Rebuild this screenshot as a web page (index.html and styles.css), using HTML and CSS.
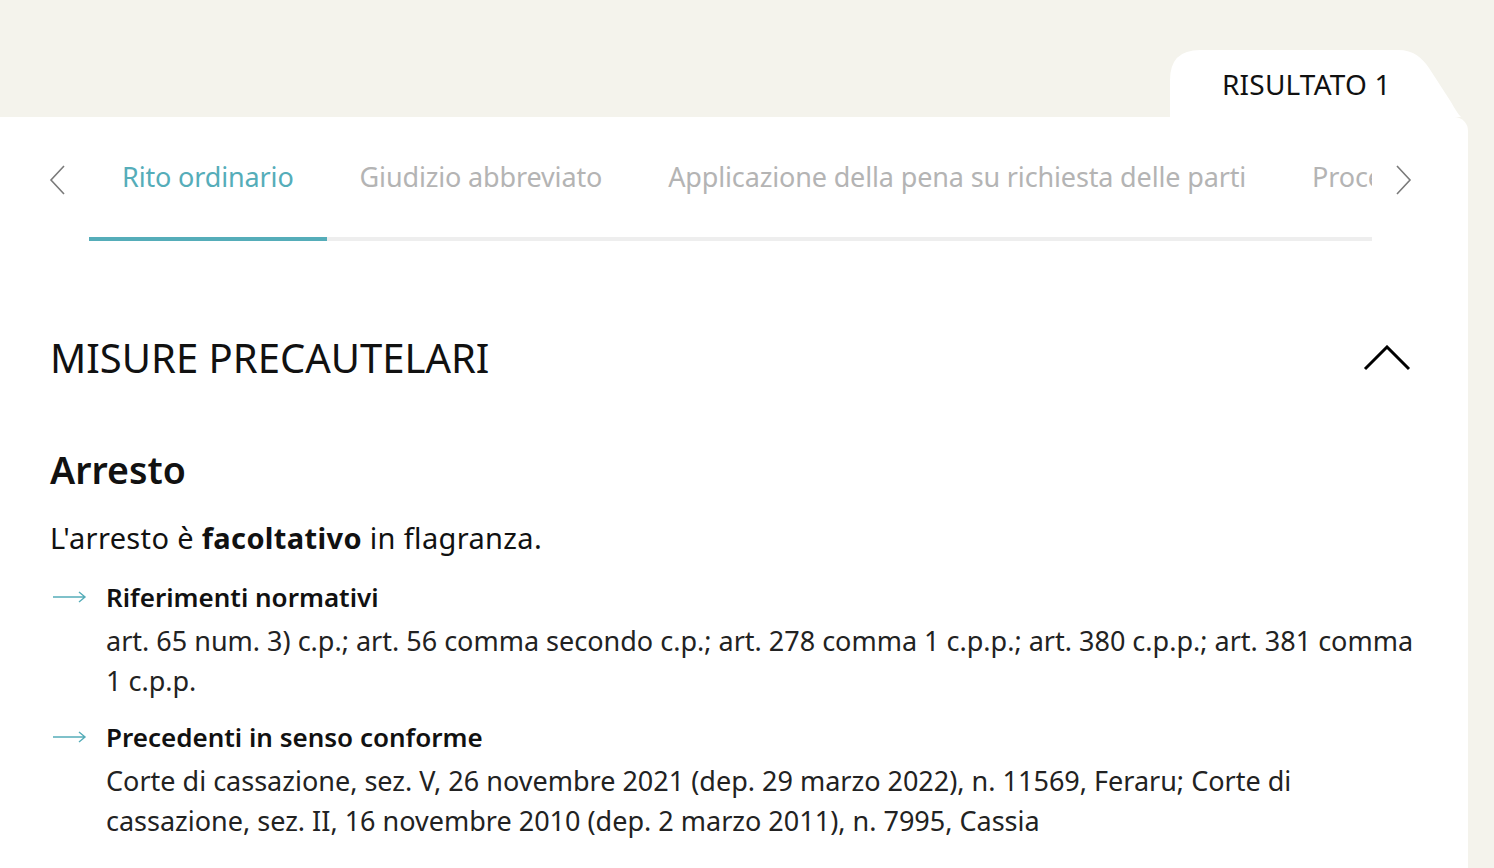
FILE: index.html
```html
<!DOCTYPE html>
<html lang="it">
<head>
  <meta charset="UTF-8">
  <meta name="viewport" content="width=device-width">
  <title>Risultato 1</title>
  <link rel="stylesheet" href="styles.css">
</head>
<body>
<div class=page>
  <div class=result-bar>
    <div class=result-tab>RISULTATO 1</div>
  </div>

  <div class=card>
    <nav class=procs>
      <button class="arrow prev" aria-label="Precedente">
        <svg width="16" height="30" viewBox="0 0 16 30"><polyline points="15,1 2,15 15,29" /></svg>
      </button>
      <div class=tabs>
        <div class="tab active">Rito ordinario</div>
        <div class=tab>Giudizio abbreviato</div>
        <div class=tab>Applicazione della pena su richiesta delle parti</div>
        <div class=tab>Procedimento per decreto</div>
      </div>
      <button class="arrow next" aria-label="Successivo">
        <svg width="16" height="30" viewBox="0 0 16 30"><polyline points="1,1 14,15 1,29" /></svg>
      </button>
    </nav>

    <section class=block>
      <div class=block-head>
        <h2>MISURE PRECAUTELARI</h2>
        <svg class=collapse width="48" height="26" viewBox="0 0 48 26"><polyline points="2,24 24,2 46,24" /></svg>
      </div>

      <h3>Arresto</h3>
      <p class=lead>L'arresto è <b>facoltativo</b> in flagranza.</p>

      <ul class=refs>
        <li>
          <svg class=arr width="34" height="12" viewBox="0 0 34 12"><path d="M0 6H32M26 1l6 5-6 5" /></svg>
          <div>
            <h4>Riferimenti normativi</h4>
            <p>art. 65 num. 3) c.p.; art. 56 comma secondo c.p.; art. 278 comma 1 c.p.p.; art. 380 c.p.p.; art. 381 comma 1 c.p.p.</p>
          </div>
        </li>
        <li>
          <svg class=arr width="34" height="12" viewBox="0 0 34 12"><path d="M0 6H32M26 1l6 5-6 5" /></svg>
          <div>
            <h4>Precedenti in senso conforme</h4>
            <p>Corte di cassazione, sez. V, 26 novembre 2021 (dep. 29 marzo 2022), n. 11569, Feraru; Corte di cassazione, sez. II, 16 novembre 2010 (dep. 2 marzo 2011), n. 7995, Cassia</p>
          </div>
        </li>
      </ul>
    </section>
  </div>
</div>
</body>
</html>
```

FILE: styles.css
```css
body {
  margin: 0;
  background: #f4f3ec;
  font-family: "Noto Sans", "Open Sans", sans-serif;
  color: #111;
  overflow: hidden;
}
.page {
  padding-top: 50px;
  width: 1468px;
}
.result-bar {
  display: flex;
  justify-content: flex-end;
}
.result-tab {
  width: 246px;
  height: 67px;
  padding-left: 52px;
  background: white;
  clip-path: path("M0,67 V30 Q0,0 30,0 H228 C244,0 252,8 259,18 L281,52 C285,59 288,64 291,67 Z");
  font-size: 28px;
  line-height: 68px;
  letter-spacing: 0.2px;
}
.card {
  background: white;
  border-top-right-radius: 14px;
  height: 760px;
}

/* procedure tabs */
.procs {
  display: flex;
  align-items: flex-start;
  gap: 25px;
  padding: 40px 57px 0 50px;
}
.arrow {
  border: 0;
  padding: 0;
  margin-top: 8px;
  background: none;
  width: 14px;
  flex-shrink: 0;
}
.arrow svg {
  display: block;
  margin-left: -1px;
  fill: none;
  stroke: #7a7a7a;
  stroke-width: 1.6;
}
.tabs {
  flex: 1;
  display: flex;
  overflow: hidden;
  box-shadow: inset 0 -4px 0 #eeeeee;
}
.tab {
  flex-shrink: 0;
  white-space: nowrap;
  padding: 0 33px 40px;
  font-size: 27px;
  line-height: 40px;
  letter-spacing: -0.15px;
  color: #b4b4b4;
  border-bottom: 4px solid transparent;
}
.tab.active {
  color: #55adb9;
  border-bottom-color: #55adb9;
}

/* content */
.block {
  padding: 0 57px 0 50px;
}
.block-head {
  display: flex;
  justify-content: space-between;
  align-items: center;
  margin-top: 89px;
  height: 56px;
}
h2 {
  margin: 0;
  font-size: 40px;
  font-weight: 400;
  line-height: 56px;
}
.collapse {
  fill: none;
  stroke: #000;
  stroke-width: 3;
}
h3 {
  margin: 60px 0 0;
  font-size: 37.5px;
  font-weight: 600;
  line-height: 48px;
}
.lead {
  margin: 24px 0 0;
  font-size: 29px;
  line-height: 40px;
  letter-spacing: 0.35px;
}
.refs {
  list-style: none;
  margin: 19px -10px 0 0;
  padding: 0;
}
.refs li {
  display: flex;
  margin-bottom: 16px;
}
.arr {
  flex-shrink: 0;
  margin: 14px 19px 0 3px;
  fill: none;
  stroke: #55adb9;
  stroke-width: 1.4;
}
h4 {
  margin: 0 0 4px;
  font-size: 26px;
  font-weight: 600;
  line-height: 40px;
}
.refs p {
  margin: 0;
  font-size: 27px;
  line-height: 40px;
  color: #222;
}
```
